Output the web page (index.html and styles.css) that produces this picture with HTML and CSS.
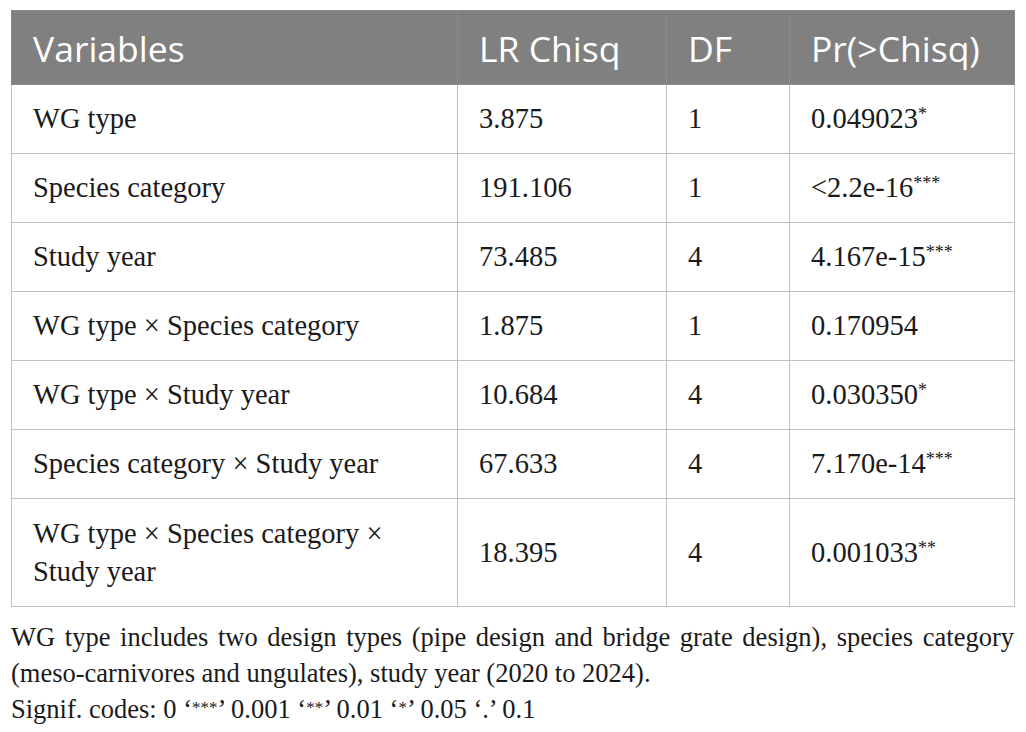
FILE: index.html
```html
<!DOCTYPE html>
<html>
<head>
<meta charset="utf-8">
<link rel="stylesheet" href="styles.css">
</head>
<body>
<div class="wrap">
<table class="tbl">
<colgroup>
<col class="c1"><col class="c2"><col class="c3"><col class="c4">
</colgroup>
<thead>
<tr><th>Variables</th><th>LR Chisq</th><th>DF</th><th>Pr(&gt;Chisq)</th></tr>
</thead>
<tbody>
<tr><td>WG type</td><td>3.875</td><td>1</td><td>0.049023<sup>*</sup></td></tr>
<tr><td>Species category</td><td>191.106</td><td>1</td><td>&lt;2.2e-16<sup>***</sup></td></tr>
<tr><td>Study year</td><td>73.485</td><td>4</td><td>4.167e-15<sup>***</sup></td></tr>
<tr><td>WG type × Species category</td><td>1.875</td><td>1</td><td>0.170954</td></tr>
<tr><td>WG type × Study year</td><td>10.684</td><td>4</td><td>0.030350<sup>*</sup></td></tr>
<tr><td>Species category × Study year</td><td>67.633</td><td>4</td><td>7.170e-14<sup>***</sup></td></tr>
<tr class="tall"><td>WG type × Species category ×<br>Study year</td><td>18.395</td><td>4</td><td>0.001033<sup>**</sup></td></tr>
</tbody>
</table>
<div class="notes">
<p class="just">WG type includes two design types (pipe design and bridge grate design), species category (meso-carnivores and ungulates), study year (2020 to 2024).</p>
<p>Signif. codes: 0 ‘<span class="ast">***</span>’ 0.001 ‘<span class="ast">**</span>’ 0.01 ‘<span class="ast">*</span>’ 0.05 ‘.’ 0.1</p>
</div>
</div>
</body>
</html>
```
FILE: styles.css
```css
html, body {
  margin: 0;
  padding: 0;
  background: #ffffff;
}
.wrap {
  padding: 10px 12px 0 11px;
  width: 1003px;
}
.tbl {
  border-collapse: collapse;
  table-layout: fixed;
  width: 1003px;
}
.c1 { width: 446px; }
.c2 { width: 209px; }
.c3 { width: 123px; }
.c4 { width: 225px; }
.tbl th {
  background: #808080;
  color: #ffffff;
  font-family: "Open Sans", sans-serif;
  font-weight: 400;
  font-size: 35.5px;
  text-align: left;
  height: 74px;
  padding: 0 0 0 21px;
  border: 1px solid #8a8a8a;
  box-sizing: border-box;
  vertical-align: middle;
}
.tbl td {
  font-family: "Liberation Serif", serif;
  font-size: 28.5px;
  color: #1a1a1a;
  height: 69px;
  padding: 0 0 0 21px;
  border: 1px solid #c0c0c0;
  box-sizing: border-box;
  vertical-align: middle;
  line-height: 38px;
}
.tbl tr.tall td {
  height: 108px;
}
.tbl sup {
  font-size: 18px;
  vertical-align: 8px;
  line-height: 0;
}
.notes {
  font-family: "Liberation Serif", serif;
  font-size: 26.5px;
  color: #1a1a1a;
  line-height: 36px;
  margin-top: 12px;
}
.notes p {
  margin: 0;
}
.notes .just {
  text-align: justify;
}
.notes .ast {
  font-size: 17px;
  vertical-align: 5px;
  line-height: 0;
}
```
